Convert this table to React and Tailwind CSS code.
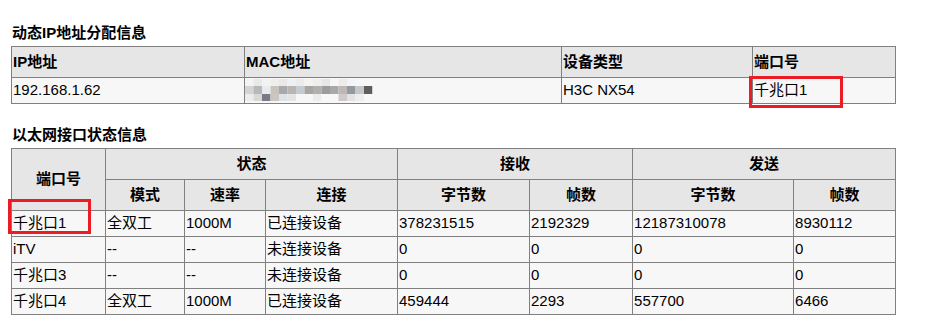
const dhcp = [{ ip: '192.168.1.62', type: 'H3C NX54', port: '千兆口1' }]

const ports = [
  { name: '千兆口1', mode: '全双工', rate: '1000M', link: '已连接设备', rxBytes: '378231515', rxFrames: '2192329', txBytes: '12187310078', txFrames: '8930112', mark: true },
  { name: 'iTV', mode: '--', rate: '--', link: '未连接设备', rxBytes: '0', rxFrames: '0', txBytes: '0', txFrames: '0' },
  { name: '千兆口3', mode: '--', rate: '--', link: '未连接设备', rxBytes: '0', rxFrames: '0', txBytes: '0', txFrames: '0' },
  { name: '千兆口4', mode: '全双工', rate: '1000M', link: '已连接设备', rxBytes: '459444', rxFrames: '2293', txBytes: '557700', txFrames: '6466' },
]

const th = 'border border-[#808080] bg-[#e6e6e6] h-[31px] p-0 font-bold'
const td = 'border border-[#808080] bg-[#f7f7f7] h-[26px] p-0 pl-[1px] text-left font-normal'

// blurred MAC address mosaic
const MacMosaic = () => {
  const top = ['#f4f4f4', '#e9e9e9', '#f2f2f2', '#eeeeee', '#e8e8e8', '#f0f0f0', '#ebebeb', '#f3f3f3', '#eeeeee', '#e6e6e6', '#f6f6f6', '#ececec', '#f4f4f4', '#f7f7f7', '#f7f7f7', '#f7f7f7']
  const mid = ['#d4d4d4', '#b8b8b8', '#e6ebef', '#c9c2bd', '#a9a9ad', '#b8b5b4', '#c4cbd2', '#aaa5a2', '#b0b0b0', '#9c9c9c', '#a8a8a8', '#bdb8b5', '#9399a0', '#c6c6c6', '#5e5e5e', '#f7f7f7']
  const bot = ['#ececec', '#d8d8d8', '#7d7885', '#ccc6c2', '#dde2e6', '#e4e4e4', '#f7f7f7', '#f7f7f7', '#ececec', '#f7f7f7', '#f7f7f7', '#cfcac7', '#e2e2e2', '#ededed', '#f7f7f7', '#f7f7f7']
  return (
    <svg width="136" height="25" viewBox="0 0 136 25" className="block">
      {top.map((c, i) => <rect key={'t' + i} x={i * 8.5} y="1" width="8.5" height="7" fill={c} />)}
      {mid.map((c, i) => <rect key={'m' + i} x={i * 8.5} y="8" width="8.5" height="8" fill={c} />)}
      {bot.map((c, i) => <rect key={'b' + i} x={i * 8.5} y="16" width="8.5" height="7" fill={c} />)}
    </svg>
  )
}

const Mark = ({ className }) => (
  <span className={'absolute border-[3px] border-[#ed1c24] pointer-events-none ' + className} />
)

export default function App() {
  return (
    <div
      className="min-h-screen bg-white pt-[23px] pl-[11px] text-[15px] text-black"
      style={{ fontFamily: '"Liberation Sans", Arial, "Noto Sans CJK SC", sans-serif' }}
    >
      <h2 className="font-bold text-[15px] leading-[20px] mb-[3px] pl-[1px]">动态IP地址分配信息</h2>
      <table className="table-fixed border-collapse w-[884px]">
        <colgroup>
          <col className="w-[233px]" />
          <col className="w-[317px]" />
          <col className="w-[191px]" />
          <col className="w-[143px]" />
        </colgroup>
        <thead>
          <tr>
            <th className={th + ' text-left pl-[1px]'}>IP地址</th>
            <th className={th + ' text-left pl-[1px]'}>MAC地址</th>
            <th className={th + ' text-left pl-[1px]'}>设备类型</th>
            <th className={th + ' text-left pl-[1px]'}>端口号</th>
          </tr>
        </thead>
        <tbody>
          {dhcp.map((d) => (
            <tr key={d.ip}>
              <td className={td}>{d.ip}</td>
              <td className={td + ' !pl-0'}><MacMosaic /></td>
              <td className={td}>{d.type}</td>
              <td className={td + ' relative'}>
                {d.port}
                <Mark className="-left-[4px] -top-[2px] w-[94px] h-[32px]" />
              </td>
            </tr>
          ))}
        </tbody>
      </table>

      <h2 className="font-bold text-[15px] leading-[20px] mt-[21px] mb-[3px] pl-[1px]">以太网接口状态信息</h2>
      <table className="table-fixed border-collapse w-[884px]">
        <colgroup>
          <col className="w-[94px]" />
          <col className="w-[79px]" />
          <col className="w-[81px]" />
          <col className="w-[132px]" />
          <col className="w-[132px]" />
          <col className="w-[103px]" />
          <col className="w-[161px]" />
          <col className="w-[102px]" />
        </colgroup>
        <thead>
          <tr>
            <th rowSpan={2} className={th + ' text-center'}>端口号</th>
            <th colSpan={3} className={th + ' text-center'}>状态</th>
            <th colSpan={2} className={th + ' text-center'}>接收</th>
            <th colSpan={2} className={th + ' text-center'}>发送</th>
          </tr>
          <tr>
            <th className={th + ' text-center'}>模式</th>
            <th className={th + ' text-center'}>速率</th>
            <th className={th + ' text-center'}>连接</th>
            <th className={th + ' text-center'}>字节数</th>
            <th className={th + ' text-center'}>帧数</th>
            <th className={th + ' text-center'}>字节数</th>
            <th className={th + ' text-center'}>帧数</th>
          </tr>
        </thead>
        <tbody>
          {ports.map((p) => (
            <tr key={p.name}>
              <td className={td + (p.mark ? ' relative' : '')}>
                {p.name}
                {p.mark && <Mark className="-left-[4px] -top-[12px] w-[83px] h-[35px]" />}
              </td>
              <td className={td}>{p.mode}</td>
              <td className={td}>{p.rate}</td>
              <td className={td}>{p.link}</td>
              <td className={td}>{p.rxBytes}</td>
              <td className={td}>{p.rxFrames}</td>
              <td className={td}>{p.txBytes}</td>
              <td className={td}>{p.txFrames}</td>
            </tr>
          ))}
        </tbody>
      </table>
    </div>
  )
}
